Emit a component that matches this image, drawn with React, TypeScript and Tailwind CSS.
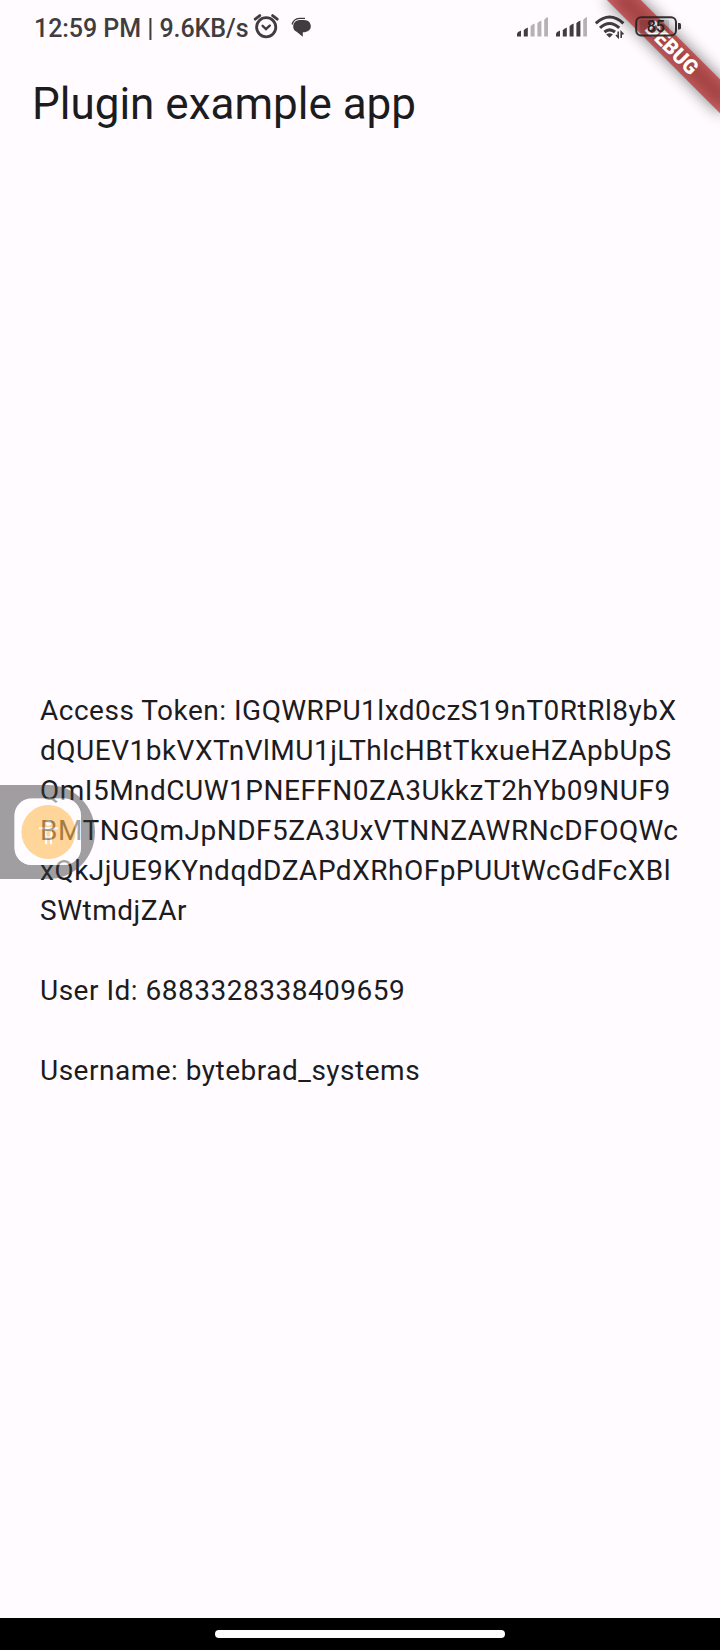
const token = [
  "Access Token: IGQWRPU1lxd0czS19nT0RtRl8ybX",
  "dQUEV1bkVXTnVlMU1jLThlcHBtTkxueHZApbUpS",
  "QmI5MndCUW1PNEFFN0ZA3UkkzT2hYb09NUF9",
  "BMTNGQmJpNDF5ZA3UxVTNNZAWRNcDFOQWc",
  "xQkJjUE9KYndqdDZAPdXRhOFpPUUtWcGdFcXBl",
  "SWtmdjZAr",
];

function Signal({ strong }: { strong: number }) {
  const tops = [13.5, 10.5, 6.5, 3.5, 0];
  return (
    <svg width="31" height="20" viewBox="0 0 31 20">
      {tops.map((t, i) => (
        <path
          key={i}
          d={`M${i * 6.8} 19.5V${t + 3}Q${i * 6.8 + 0.3} ${t + 1.5} ${i * 6.8 + 4} ${t}V19.5Z`}
          fill={i < strong ? "#3f3d40" : "#b5b2b6"}
        />
      ))}
    </svg>
  );
}

function StatusBar() {
  return (
    <div className="flex h-[60px] items-start pl-[34px] text-[#3f3d40]">
      <span className="mt-[14px] w-[216px] whitespace-nowrap text-[25px] leading-[30px] font-medium tracking-[-0.06px]">12:59 PM | 9.6KB/s</span>
      <svg className="mt-[13px] ml-[3px]" width="26" height="27" viewBox="0 0 26 27" fill="none" stroke="currentColor" strokeLinecap="round">
        <circle cx="13.2" cy="14.3" r="9.6" strokeWidth="2.8" />
        <path d="M2.2 6.2L6.8 2.6M24.2 6.2L19.6 2.6" strokeWidth="2.8" />
        <path d="M9.6 12.8L13 16L16.8 12.6" strokeWidth="2.4" />
      </svg>
      <svg className="mt-[17px] ml-3" width="21" height="21" viewBox="0 0 21 21">
        <path d="M1.2 7.5Q2.4 1.8 8.5 1.4H14" fill="none" stroke="currentColor" strokeWidth="1.4" />
        <path d="M8.5 2.9H13C17.4 2.9 19.8 5.8 19.8 9.2C19.8 13 17 15 11.8 15.3V19.8L5.6 14.8C3 13.6 2 11.5 2.2 9C2.6 5.4 5.2 3 8.5 2.9Z" fill="currentColor" />
      </svg>
      <div className="mt-[17px] ml-[205px] flex gap-2">
        <Signal strong={2} />
        <Signal strong={4} />
      </div>
      <svg className="mt-[15px] ml-2" width="30" height="25" viewBox="0 0 30 25" fill="none" stroke="currentColor" strokeWidth="3.1">
        <path d="M.8 8.3Q14.5-4.3 28.4 8.3M5 12.8Q14.5 4.2 24.2 12.8M9.4 17Q14.5 12.6 20 17" />
        <path d="M11.2 19.5Q14.5 17.2 17.9 19.5L14.5 22.8Z" fill="currentColor" stroke="none" />
        <path d="M23.2 16.5V22.3L21 20M26.2 23V17L28.4 19.4" strokeWidth="1.6" />
      </svg>
    </div>
  );
}

function Battery() {
  return (
    <svg className="absolute top-[16px] left-[635px]" width="48" height="21" viewBox="0 0 48 21">
      <rect x="1.2" y="1.2" width="39.8" height="18.4" rx="5" fill="none" stroke="#252325" strokeOpacity=".93" strokeWidth="2" />
      <path d="M6 4H34V17H6Q4.5 17 4.5 15V6Q4.5 4 6 4Z" fill="#000" fillOpacity=".14" />
      <path d="M43 7H44.5Q46 7.2 46 8.5V12Q46 13.4 44.5 13.5H43Z" fill="#353335" />
      <text x="20.8" y="16.2" textAnchor="middle" fontSize="16" fontWeight="500" fill="#252325">85</text>
    </svg>
  );
}

function DebugBanner() {
  return (
    <div className="absolute top-0 right-0 h-[160px] w-[160px] overflow-hidden">
      <div className="absolute top-[56px] left-[80px] h-6 w-40 origin-[80px_-56px] rotate-45">
        <div className="absolute inset-0 bg-black/50 blur-[8px]" />
        <div className="absolute inset-0 flex items-center justify-center bg-[#b71c1c]/63 text-[20.4px] leading-none font-black text-white">
          DEBUG
        </div>
      </div>
    </div>
  );
}

function FloatingDock() {
  return (
    <svg className="absolute top-[785px] left-0" width="96" height="95" viewBox="0 0 96 95">
      <path
        d="M0 0H48A47 47 0 0 1 48 94H0ZM31.5 13.5A17 17 0 0 0 14.5 30.5V63A17 17 0 0 0 31.5 80H64A17 17 0 0 0 81 63V30.5A17 17 0 0 0 64 13.5Z"
        fill="#383838"
        fillOpacity=".48"
        fillRule="evenodd"
      />
      <g opacity=".6">
        <rect x="14.5" y="13.5" width="66.5" height="66.5" rx="17" fill="#fff" />
        <circle cx="48.4" cy="47" r="27" fill="#ffbc58" />
        <circle cx="48.4" cy="37.8" r="2.8" fill="#fff" />
        <path d="M39 42.3H58V44.2H39ZM44.8 44H52V54H44.8ZM45 52H47.2V59.3H45ZM49.8 52H52V59.3H49.8Z" fill="#fff" />
        <path d="M46.5 45.5H50.3V51.5H46.5Z" fill="#ffbc58" />
      </g>
    </svg>
  );
}

export default function App() {
  return (
    <div className="relative flex h-[1650px] w-[720px] flex-col overflow-hidden bg-[#fffbff] font-[Roboto,sans-serif] text-[#1c1b1e]">
      <StatusBar />
      <header className="flex h-[112px] items-start px-8 pt-[18px]">
        <h1 className="text-[44px] leading-[52px] whitespace-nowrap">Plugin example app</h1>
      </header>
      <main className="flex grow flex-col justify-center px-10 pb-2 text-[28px] leading-[40px] tracking-[0.5px] whitespace-pre">
        {token.map((line) => (
          <div key={line}>{line}</div>
        ))}
        <p className="mt-10">User Id: 6883328338409659</p>
        <p className="mt-10">Username: bytebrad_systems</p>
      </main>
      <div className="flex h-8 items-center justify-center bg-black">
        <div className="h-2 w-[290px] rounded-full bg-white" />
      </div>
      <FloatingDock />
      <DebugBanner />
      <Battery />
    </div>
  );
}
